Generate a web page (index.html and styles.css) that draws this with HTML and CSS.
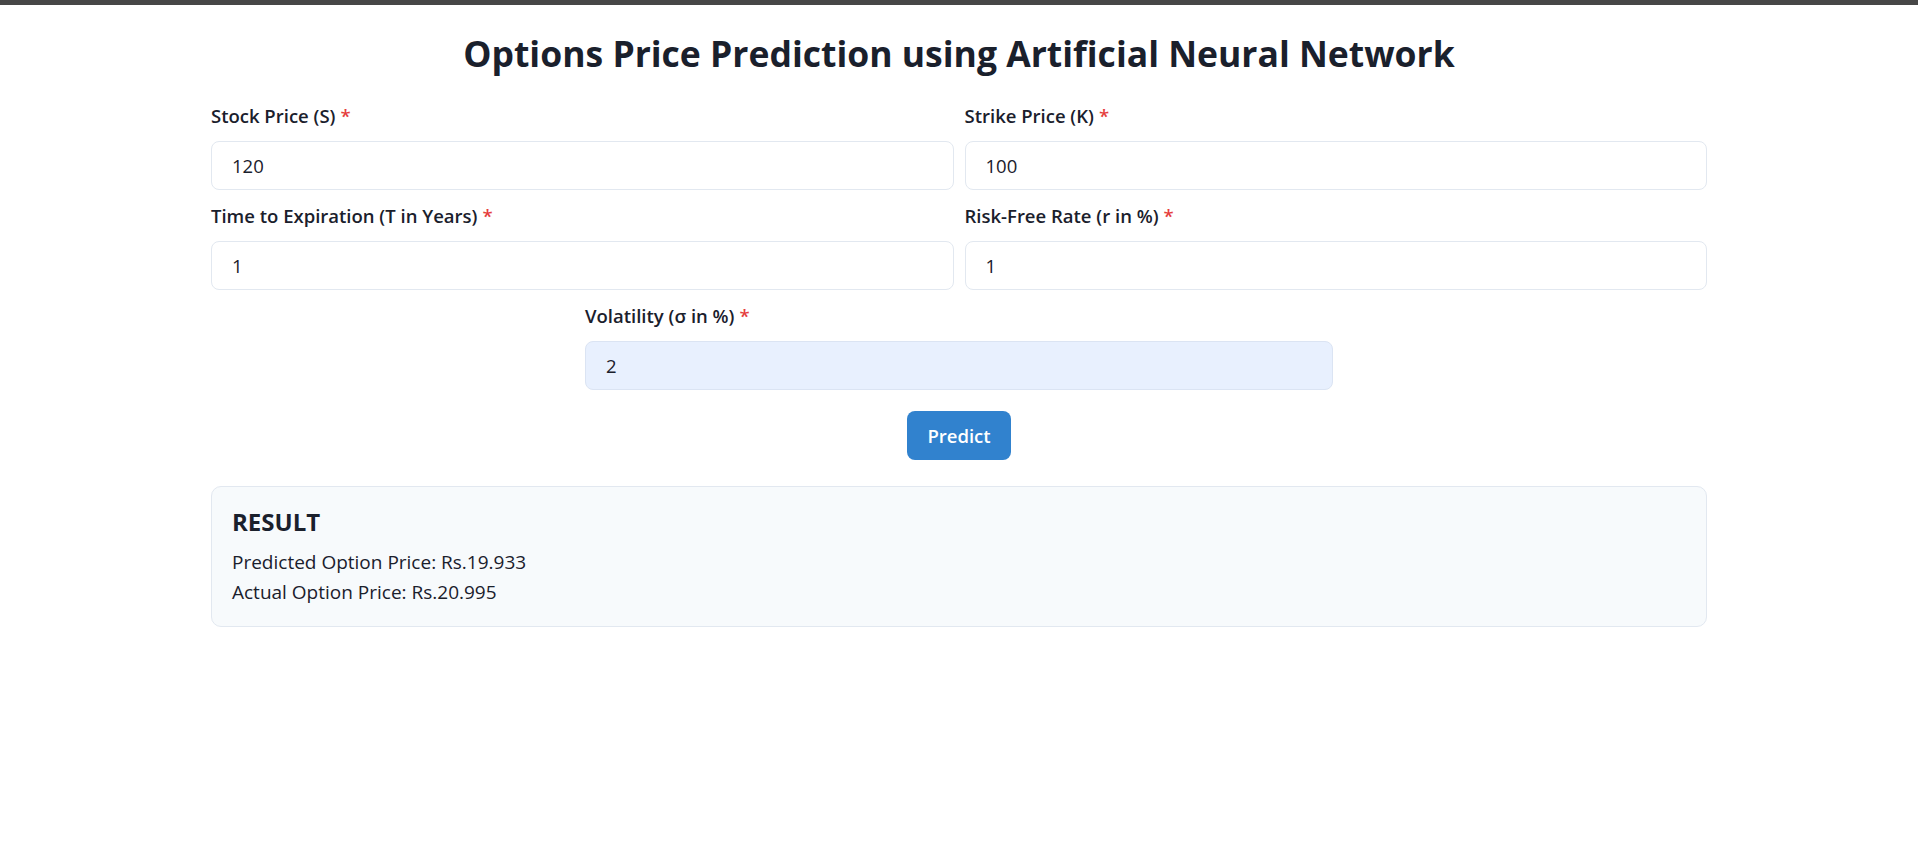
FILE: index.html
```html
<!DOCTYPE html>
<html lang="en">
<head>
<meta charset="utf-8">
<title>Options Price Prediction</title>
<link rel="stylesheet" href="styles.css">
</head>
<body>
<div class="topbar"></div>
<main class="container">
  <h1 class="title">Options Price Prediction using Artificial Neural Network</h1>
  <form class="form" onsubmit="return false;">
    <div class="grid">
      <div class="field">
        <label class="label">Stock Price (S)<span class="req">*</span></label>
        <input class="input" type="text" value="120">
      </div>
      <div class="field">
        <label class="label">Strike Price (K)<span class="req">*</span></label>
        <input class="input" type="text" value="100">
      </div>
      <div class="field">
        <label class="label">Time to Expiration (T in Years)<span class="req">*</span></label>
        <input class="input" type="text" value="1">
      </div>
      <div class="field">
        <label class="label">Risk-Free Rate (r in %)<span class="req">*</span></label>
        <input class="input" type="text" value="1">
      </div>
    </div>
    <div class="field field-center">
      <label class="label">Volatility (σ in %)<span class="req">*</span></label>
      <input class="input input-filled" type="text" value="2">
    </div>
    <div class="actions">
      <button class="btn" type="submit">Predict</button>
    </div>
  </form>
  <section class="result">
    <h2 class="result-title">RESULT</h2>
    <p class="result-line">Predicted Option Price: Rs.19.933</p>
    <p class="result-line">Actual Option Price: Rs.20.995</p>
  </section>
</main>
</body>
</html>
```
FILE: styles.css
```css
* { box-sizing: border-box; }
html, body { margin: 0; padding: 0; background: #ffffff; }
body {
  font-family: "Open Sans", "Noto Sans", Arial, sans-serif;
  color: #1a202c;
}
.topbar { height: 5px; background: #474747; }
.container {
  width: 1496px;
  margin: 0 auto;
}
.title {
  margin: 24px 0 23.5px;
  font-size: 35.5px;
  line-height: 48px;
  font-weight: 700;
  text-align: center;
  color: #1a202c;
}
.form { margin: 0; }
.grid {
  display: grid;
  grid-template-columns: 1fr 1fr;
  column-gap: 11px;
  row-gap: 11px;
}
.field { display: flex; flex-direction: column; }
.field-center { width: 50%; margin: 11px auto 0; }
.label {
  font-size: 18.5px;
  line-height: 30px;
  font-weight: 600;
  margin-bottom: 10px;
  color: #1a202c;
}
.req { color: #e53e3e; margin-left: 5px; }
.input {
  height: 49px;
  padding: 0 20px;
  border: 1px solid #e2e8f0;
  border-radius: 8px;
  font-family: inherit;
  font-size: 18.5px;
  color: #1a202c;
  background: #ffffff;
  outline: none;
}
.input-filled { background: #e8f0fe; border-color: #dbe4f3; }
.actions { display: flex; justify-content: center; margin-top: 21px; }
.btn {
  height: 49px;
  padding: 0 20px;
  border: none;
  border-radius: 8px;
  background: #3182ce;
  color: #ffffff;
  font-family: inherit;
  font-size: 18.5px;
  font-weight: 600;
  cursor: pointer;
}
.result {
  margin-top: 26.5px;
  padding: 20px 20px 19px;
  border: 1px solid #e2e8f0;
  border-radius: 10px;
  background: #f7fafc;
}
.result-title {
  margin: 0 0 10px;
  font-size: 24px;
  line-height: 30px;
  font-weight: 700;
}
.result-line {
  margin: 0;
  font-size: 19px;
  line-height: 30px;
}
```
